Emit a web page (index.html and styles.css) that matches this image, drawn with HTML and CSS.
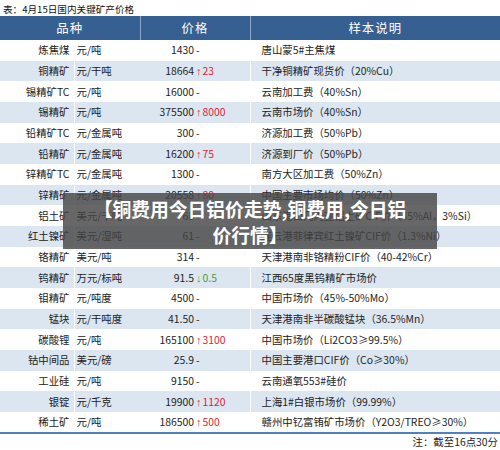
FILE: index.html
```html
<!DOCTYPE html>
<html lang="zh">
<head>
<meta charset="utf-8">
<title>4月15日国内关键矿产价格</title>
<link rel="stylesheet" href="styles.css">
</head>
<body>
<div class="page">
  <div class="caption">表：4月15日国内关键矿产价格</div>
  <table class="prices">
    <colgroup>
      <col class="c-name"><col class="c-unit"><col class="c-num"><col class="c-chg"><col class="c-desc">
    </colgroup>
    <thead>
      <tr><th colspan="2">品种</th><th colspan="2">价格</th><th>样本说明</th></tr>
    </thead>
    <tbody>
      <tr><td class="name">炼焦煤</td><td>元/吨</td><td class="num">1430</td><td class="chg">-</td><td class="desc">唐山蒙5#主焦煤</td></tr>
      <tr><td class="name">铜精矿</td><td>元/干吨</td><td class="num">18664</td><td class="chg up"><span class="ar">↑</span>23</td><td class="desc">干净铜精矿现货价（20%Cu）</td></tr>
      <tr><td class="name">锡精矿TC</td><td>元/吨</td><td class="num">16000</td><td class="chg">-</td><td class="desc">云南加工费（40%Sn）</td></tr>
      <tr><td class="name">锡精矿</td><td>元/吨</td><td class="num">375500</td><td class="chg up"><span class="ar">↑</span>8000</td><td class="desc">云南市场价（40%Sn）</td></tr>
      <tr><td class="name">铅精矿TC</td><td>元/金属吨</td><td class="num">300</td><td class="chg">-</td><td class="desc">济源加工费（50%Pb）</td></tr>
      <tr><td class="name">铅精矿</td><td>元/金属吨</td><td class="num">16200</td><td class="chg up"><span class="ar">↑</span>75</td><td class="desc">济源到厂价（50%Pb）</td></tr>
      <tr><td class="name">锌精矿TC</td><td>元/金属吨</td><td class="num">1300</td><td class="chg">-</td><td class="desc">南方大区加工费（50%Zn）</td></tr>
      <tr><td class="name">锌精矿</td><td>元/金属吨</td><td class="num">20558</td><td class="chg up"><span class="ar">↑</span>80</td><td class="desc">中国主要市场均价（50%Zn）</td></tr>
      <tr><td class="name">铝土矿</td><td>美元/干吨</td><td class="num">68</td><td class="chg">-</td><td class="desc">山东港口几内亚铝土矿CIF价（45%Al，3%Si）</td></tr>
      <tr><td class="name">红土镍矿</td><td>美元/湿吨</td><td class="num">61</td><td class="chg">-</td><td class="desc">连云港菲律宾红土镍矿CIF价（1.3%Ni）</td></tr>
      <tr><td class="name">铬精矿</td><td>美元/吨</td><td class="num">314</td><td class="chg">-</td><td class="desc">天津港南非铬精粉CIF价（40-42%Cr）</td></tr>
      <tr><td class="name">钨精矿</td><td>万元/标吨</td><td class="num">91.5</td><td class="chg down"><span class="ar">↓</span>0.5</td><td class="desc">江西65度黑钨精矿市场价</td></tr>
      <tr><td class="name">钼精矿</td><td>元/吨度</td><td class="num">4500</td><td class="chg">-</td><td class="desc">中国市场价（45%-50%Mo）</td></tr>
      <tr><td class="name">锰块</td><td>元/干吨度</td><td class="num">41.50</td><td class="chg">-</td><td class="desc">天津港南非半碳酸锰块（36.5%Mn）</td></tr>
      <tr><td class="name">碳酸锂</td><td>元/吨</td><td class="num">165100</td><td class="chg up"><span class="ar">↑</span>3100</td><td class="desc">中国市场价（Li2CO3≥99.5%）</td></tr>
      <tr><td class="name">钴中间品</td><td>美元/磅</td><td class="num">25.9</td><td class="chg">-</td><td class="desc">中国主要港口CIF价（Co≥30%）</td></tr>
      <tr><td class="name">工业硅</td><td>元/吨</td><td class="num">9150</td><td class="chg">-</td><td class="desc">云南通氧553#硅价</td></tr>
      <tr><td class="name">银锭</td><td>元/千克</td><td class="num">19900</td><td class="chg up"><span class="ar">↑</span>1120</td><td class="desc">上海1#白银市场价（99.99%）</td></tr>
      <tr><td class="name">稀土矿</td><td>元/吨</td><td class="num">186500</td><td class="chg up"><span class="ar">↑</span>500</td><td class="desc">赣州中钇富铕矿市场价（Y2O3/TREO≥30%）</td></tr>
    </tbody>
  </table>
  <div class="note">注：截至16点30分</div>
  <div class="overlay">【铜费用今日铝价走势,铜费用,今日铝<br>价行情】</div>
</div>
</body>
</html>
```
FILE: styles.css
```css
* { box-sizing: border-box; }
html, body {
  margin: 0;
  padding: 0;
  background: #ffffff;
}
body {
  font-family: "Noto Sans CJK SC", "Noto Sans", sans-serif;
  color: #222222;
}
.page {
  position: relative;
  width: 500px;
  height: 450px;
  overflow: hidden;
}
.caption {
  height: 16px;
  padding: 2px 0 0 3px;
  font-size: 9.6px;
  line-height: 14px;
  color: #111;
}
.prices {
  width: 500px;
  border-collapse: collapse;
  table-layout: fixed;
  font-size: 10.4px;
  border-bottom: 2px solid #4f81bd;
}
.c-name { width: 74px; }
.c-unit { width: 66px; }
.c-num { width: 54px; }
.c-chg { width: 56px; }
.c-desc { width: 250px; }
.prices th {
  height: 24px;
  background: #376092;
  color: #ffffff;
  font-weight: normal;
  font-size: 12.4px;
  letter-spacing: 1px;
  padding: 0;
  border-left: 1px solid #8ea8c9;
  text-align: center;
}
.prices th:first-child { border-left: none; }
.prices td {
  height: 20.68px;
  padding: 0;
  line-height: 14px;
  white-space: nowrap;
  overflow: visible;
  border-left: 1px solid #ffffff;
}
.prices td:first-child { border-left: none; }
.prices tbody tr:nth-child(even) td { background: #dce6f1; }
.prices td.name { text-align: right; padding-right: 4px; }
.prices td:nth-child(2) { padding-left: 2px; }
.prices td.num { text-align: right; padding-right: 0; border-left: none; }
.prices td.chg { padding-left: 2px; border-left: none; }
.prices td.desc { padding-left: 11px; }
.up { color: #e0203a; }
.down { color: #4e9a32; }
.ar {
  font-family: "Liberation Sans", "DejaVu Sans", sans-serif;
  font-size: 11px;
  margin-right: 1px;
}
.note {
  text-align: right;
  font-size: 10.4px;
  line-height: 14px;
  padding: 1px 2px 0 0;
}
.overlay {
  position: absolute;
  left: 63px;
  top: 193px;
  width: 374px;
  height: 56px;
  background: rgba(70, 70, 70, 0.82);
  color: #ffffff;
  font-weight: bold;
  font-size: 18.8px;
  line-height: 26px;
  text-align: center;
  padding-top: 3px;
  white-space: nowrap;
}
```
